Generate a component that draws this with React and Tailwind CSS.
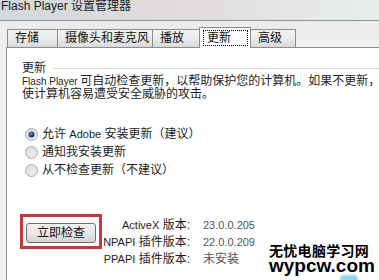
import React from "react";

const CJK = '"Liberation Sans","Noto Sans CJK SC",sans-serif';

function Radio({ checked }) {
  return (
    <svg width="13" height="13" viewBox="0 0 13 13" className="shrink-0">
      <defs>
        <linearGradient id={checked ? "rgc" : "rgu"} x1="0" y1="0" x2="1" y2="1">
          <stop offset="0" stopColor="#d6d6d6" />
          <stop offset="1" stopColor="#f8f8f8" />
        </linearGradient>
        <radialGradient id="dot" cx="0.4" cy="0.35" r="0.7">
          <stop offset="0" stopColor="#5c8fc0" />
          <stop offset="0.6" stopColor="#1d4a78" />
          <stop offset="1" stopColor="#10263f" />
        </radialGradient>
      </defs>
      <circle cx="6.5" cy="6.5" r="6" fill={`url(#${checked ? "rgc" : "rgu"})`} stroke="#a9a9a9" strokeWidth="1" />
      <circle cx="6.5" cy="6.5" r="4.3" fill="none" stroke="#e2e2e2" strokeWidth="1" />
      {checked && <circle cx="6.5" cy="6.5" r="3" fill="url(#dot)" />}
    </svg>
  );
}

function Tab({ w, children }) {
  return (
    <div
      className={`${w} h-[18px] border border-b-0 border-[#898c95] -ml-px first:ml-0 pl-[7px] text-[12px] leading-[17px] text-[#111] bg-gradient-to-b from-[#f3f3f3] via-[#ebebeb] to-[#d9d9d9]`}
    >
      {children}
    </div>
  );
}

export default function App() {
  return (
    <div
      className="relative w-[379px] h-[280px] overflow-hidden bg-[#f0f0f0] flex flex-col"
      style={{ fontFamily: CJK }}
    >
      {/* title bar */}
      <div className="h-[21px] shrink-0 border-b border-[#8d969c] bg-gradient-to-r from-[#d3d8dc] via-[#e2dcdd] to-[#e6eeeb] pl-[1px]">
        <div className="text-[12px] leading-[12px] text-[#1a1a1a] whitespace-nowrap">
          Flash Player 设置管理器
        </div>
      </div>

      {/* tab strip */}
      <div className="h-[26px] shrink-0 flex items-end pl-[7px] bg-gradient-to-b from-[#ebebeb] to-[#f0f0f0] relative z-10">
        <Tab w="w-[51px]">存储</Tab>
        <Tab w="w-[96px]">摄像头和麦克风</Tab>
        <Tab w="w-[48px]">播放</Tab>
        <div className="w-[52px] h-[21px] -ml-px -mb-px border border-b-0 border-[#898c95] bg-white pt-[2px] pl-[3px] pr-[2px]">
          <div className="h-[16px] border border-dotted border-black pl-[3px] text-[12px] leading-[14px] text-[#111]">
            更新
          </div>
        </div>
        <Tab w="w-[46px]">高级</Tab>
      </div>

      {/* panel */}
      <div className="flex-1 ml-[6px] border-t border-l border-[#898c95] bg-white flex flex-col">
        {/* group label */}
        <div className="mt-[13px] pl-[15px] flex items-center h-[14px]">
          <span className="text-[12px] leading-[14px] text-[#1e1e1e]">更新</span>
          <div className="flex-1 h-px bg-[#d5dfe5] ml-[6px]" />
        </div>

        {/* description */}
        <div className="pl-[15px] text-[12px] leading-[13px] text-[#1e1e1e] whitespace-nowrap">
          <div>
            <span className="text-[10px]">Flash Player </span>可自动检查更新，以帮助保护您的计算机。如果不更新，
          </div>
          <div>使计算机容易遭受安全威胁的攻击。</div>
        </div>

        {/* radios */}
        <div className="mt-[24px] pl-[18px] flex flex-col text-[12px] leading-[18px] text-[#1e1e1e]">
          <div className="flex items-center gap-[4px] whitespace-nowrap">
            <Radio checked />
            <span>
              允许 <span className="text-[11px]">Adobe</span> 安装更新（建议）
            </span>
          </div>
          <div className="flex items-center gap-[4px] whitespace-nowrap">
            <Radio />
            <span>通知我安装更新</span>
          </div>
          <div className="flex items-center gap-[4px] whitespace-nowrap">
            <Radio />
            <span>从不检查更新（不建议）</span>
          </div>
        </div>

        {/* button & versions */}
        <div className="mt-[35px] pl-[13px] flex items-start">
          <div className="w-[82px] h-[35px] border-[3px] border-[#c3383d] flex items-center justify-center pt-[2px]">
            <div className="w-[70px] h-[20px] rounded-[3px] border border-[#707070] bg-gradient-to-b from-[#f2f2f2] via-[#e8e8e8] to-[#d2d2d2] flex items-center justify-center text-[12px] leading-[18px] text-[#111]">
              立即检查
            </div>
          </div>
          <div className="w-[88px] mt-[3px] flex flex-col items-end text-[12px] leading-[17px] text-[#1e1e1e] whitespace-nowrap">
            <div>
              <span className="text-[11px]">ActiveX</span> 版本:
            </div>
            <div>
              <span className="text-[11px]">NPAPI</span> 插件版本:
            </div>
            <div>
              <span className="text-[11px]">PPAPI</span> 插件版本:
            </div>
          </div>
          <div className="ml-[13px] mt-[3px] flex flex-col text-[11px] leading-[17px] text-[#555] whitespace-nowrap">
            <div>23.0.0.205</div>
            <div>22.0.0.209</div>
            <div className="text-[12px]">未安装</div>
          </div>
        </div>
      </div>

      {/* watermark */}
      <div className="absolute left-[269px] top-[244px] flex flex-col items-start">
        <div className="text-[14px] leading-[13px] font-bold text-black tracking-[0.3px]" style={{ fontFamily: '"Noto Sans CJK SC",sans-serif' }}>
          无忧电脑学习网
        </div>
        <div className="mt-[2px] text-[19px] leading-[13px] font-bold text-black" style={{ fontFamily: '"Liberation Sans",sans-serif' }}>
          wypcw.com
        </div>
      </div>
      <div className="absolute left-[340px] top-[275px] w-[18px] h-[8px] rounded-full bg-[#8fd6e8] blur-[1px]" />
    </div>
  );
}
